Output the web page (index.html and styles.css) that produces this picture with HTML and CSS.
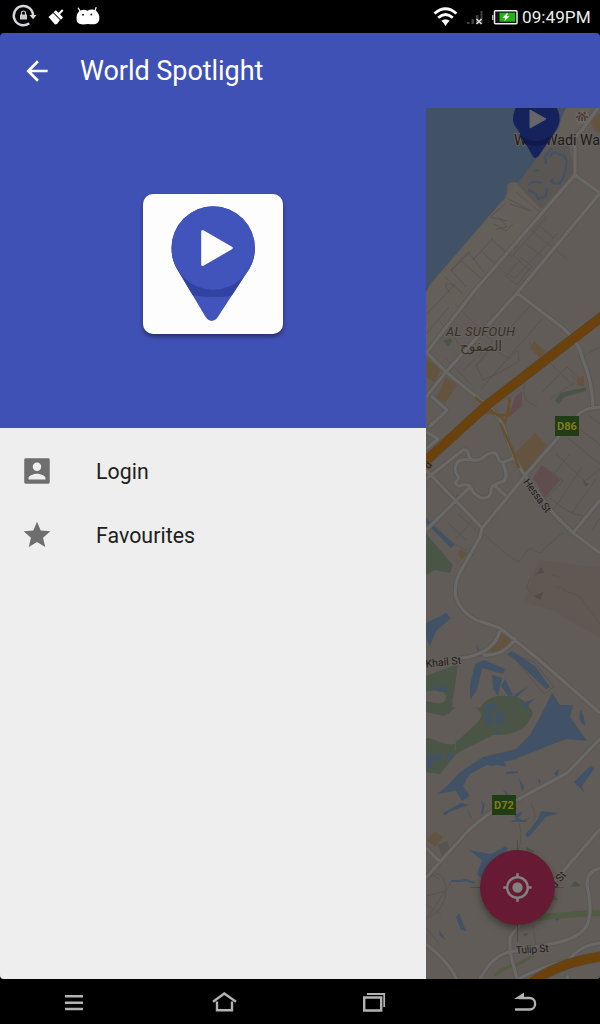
FILE: index.html
```html
<!DOCTYPE html>
<html lang="en">
<head>
<meta charset="utf-8">
<title>World Spotlight</title>
<link rel="stylesheet" href="styles.css">
</head>
<body>
<div class="screen">
  <header class="status">
    <svg class="status-left" width="110" height="33" viewBox="0 0 110 33">
      <path d="M29.200 23.300A9.600 9.600 0 1 1 33 15.500" fill="none" stroke="#d5d5dc" stroke-width="2.500"/>
      <path d="M29.500 15h7l-3.500 4.300z" fill="#d5d5dc"/>
      <rect x="20" y="14.500" width="7" height="5" fill="#ccc"/>
      <path d="M21.500 15v-2a2 2 0 0 1 4 0v2" fill="none" stroke="#ccc" stroke-width="1.200"/>
      <path d="M48.500 17l4.500-4 7 7-3 4-2 .5zM53.500 12.200l2.300-2 2.700 2.600 3.500-3.600 1.500 1.500-3.500 3.600 3 3.200-2 2.200z" fill="#fff"/>
      <path d="M80 11l-1.800-2.800M95 11l1-3.300" stroke="#fff" stroke-width="1.300" stroke-linecap="round"/>
      <path d="M78.500 12c2.500-2.800 6.500-2.800 9-1.300 3-1.800 7-1.600 9.300.8 3 3 3.200 7.500 1.700 10.300-2 3.200-6 2.700-10.500 2.200-5 .8-9.500.8-11-2.500-1-3-.6-7 1.500-9.500z" fill="#fff"/>
      <circle cx="83" cy="14.800" r="1" fill="#222"/><circle cx="91.300" cy="14.500" r="1" fill="#222"/>
    </svg>
    <div class="status-right">
      <svg width="86" height="33" viewBox="432 0 86 33">
        <g fill="none" stroke="#fff" stroke-width="2.800"><path d="M434.500 13.500Q445.500 4 456.500 13.500M438.200 17.700Q445.500 11.200 452.800 17.700"/></g>
        <path d="M441.300 20.700q4.200-3 8.400 0L447.500 23l-2 3-2-3z" fill="#fff"/>
        <path d="M467 22h2.500v2H467zM471.500 19h2.500v5h-2.500zM476 15h2.500v9H476zM480.500 11h2v13h-2z" fill="#414141"/>
        <path d="M476.500 19l5 5m0-5l-5 5" stroke="#ddd" stroke-width="1.600"/>
        <rect x="494.500" y="10.700" width="22.500" height="13" rx="1" fill="#111" stroke="#eee" stroke-width="1.500"/>
        <path d="M492.800 15v5" stroke="#ccc" stroke-width="1.300"/>
        <rect x="499.500" y="12.700" width="15.500" height="9" fill="#20b414"/>
        <path d="M507 13l-4.500 4.800h2.500l-.5 3.500 5-5H507l.8-3.300z" fill="#fff"/>
      </svg>
      <span class="clock">09:49PM</span>
    </div>
  </header>

  <main class="app">
    <div class="toolbar">
      <svg class="back" width="32" height="32" viewBox="0 0 24 24"><path d="M20 11H7.830l5.590-5.590L12 4l-8 8 8 8 1.410-1.410L7.830 13H20v-2z" fill="#fff"/></svg>
      <h1 class="title">World Spotlight</h1>
    </div>
    <div class="content">
      <aside class="drawer">
        <div class="hero">
          <div class="logo">
            <svg width="140" height="140" viewBox="143 194 140 140">
              <clipPath id="pin"><path d="M171.500 248a41.700 41.700 0 1 1 83.400 0c0 8-2 14-5.500 20.500L218.500 316c-4 6.500-9.500 6.500-13.500 0l-28.500-48c-3-6-5-12-5-20z"/></clipPath>
              <g clip-path="url(#pin)">
                <path d="M165 200h95v130h-95z" fill="#4154bb"/>
                <path d="M165 255h95v32q-22 10-47 10t-48-10z" fill="#3142a0"/>
                <path d="M188 291.500l7 3.500M165 287v10l28-2z" fill="#3142a0"/>
              </g>
              <circle cx="213.200" cy="248" r="41.700" fill="#4154bb"/>
              <path d="M202.700 231.500l28.500 16.500-28.500 16.500z" fill="#fdfdfd" stroke="#fdfdfd" stroke-width="3" stroke-linejoin="round"/>
            </svg>
          </div>
        </div>
        <nav class="menu">
          <a class="item"><svg width="34" height="34" viewBox="0 0 24 24"><path d="M3 4v16c0 .6.4 1 1 1h16c.6 0 1-.4 1-1V4c0-.6-.4-1-1-1H4c-.6 0-1 .4-1 1zm12 5c0 1.660-1.340 3-3 3s-3-1.340-3-3 1.340-3 3-3 3 1.340 3 3zm-9 8c0-2 4-3.100 6-3.100s6 1.100 6 3.100v1H6v-1z"/></svg><span class="login">Login</span></a>
          <a class="item"><svg width="32" height="32" viewBox="0 0 24 24"><path d="M12 17.270L18.180 21l-1.640-7.030L22 9.240l-7.190-.61L12 2 9.190 8.630 2 9.240l5.460 4.730L5.820 21z"/></svg><span class="fav">Favourites</span></a>
        </nav>
      </aside>
      <section class="map">
        <svg class="map-art" width="174" height="871" viewBox="426 108 174 871">
          <rect x="426" y="108" width="174" height="871" fill="#615c57"/>
          <path class="sand" d="M566 108L535 158 507 195 426 290V350L475 295 574 180 577 131 592 108z"/>
          <path fill="#595653" d="M543 145l24-8 8 34-34 38-24-25z"/>
          <path class="water" d="M426 108H566Q560 119 559 128L543 148 531 166 518 183Q512 180 507 185 508 192 505 198L488 217 458 252 431 283 426 292z"/>
          <g class="lake-line"><path d="M550 157c5-10 10 0 13-2 6 5 3 12 2 17s-4 12-8 12-8-4-3-5M546 164l-1-8 7-8M529 185c5-7 10 0 13-3M528 190l8 4 2 5 8-3 1-8M534 171l5-1"/></g>
          <path class="rough" d="M538 560l62 8v70l-48-28-28-8z"/>

          <g class="minor">
            <path d="M516 192l30 25-14 14 35 28M548 217l-35 38 17 16M558 233l-43 45-12-6M521 258l11 8-15 19-11-9zM541 227l13 11M526 244l16 12M491 239l22 19M481 251l20 18M493 238l-20 22M460 260l23 20M470 252l-19 18 15 17M452 270l16-18 16 20M445 277l18 17M450 293c-8-9-3-13 4-6M505 204l-15 13 17 4M507 198l24 13-21-7M499 217l8 10-11 2M494 224l12 7 7-7"/>
            <path d="M455 304l38 38-30 28M426 315l30-32M440 322l22 25M449 307l-22 26M445 358l27 27M530 306l-55 61M543 318l-62 71M476 365l15-18 18 12 9-9 1 11-18 11-18 8zM529 343l45 43M526 378c-5 17-1 25 11 28M589 353l11-6M586 371q-7-9 0-17M542 392l25-25 21 20M550 399l25-17M570 374l13 13M588 415l12 9M577 427l23 18M568 438l32 26M556 454l29 27 15-12M545 467l18 14-25 26M570 454l-31 39M582 467l-28 42M596 479l-25 35M583 516q-15-2-33-18M592 530l8-12M448 523l18 17M458 514l18 16M438 534l29 17M474 518l-18 21"/>
            <path d="M483 533c18 17 27 24 34 28 4 4 7-10 12-12s9 6 12 3l22-20M531 577l-5 11 11 10M535 576l5-8M556 588q6-3 10 4 11 0 17 9l17 23M552 575l9 3"/>
            <path d="M426 879c13-8 16-5 19 4s0 28-19 36M427 918l25-37M426 896l19-5M426 904l15 10M426 928l13 15M514 815q12 12 3 40M531 803q7 14 2 19M533 925l3 22M440 880l-12-8"/>
            <path d="M511 653l23 9 20 25-10 7-8-10-21-25"/>
          </g>
          <path fill="#514d49" d="M537 574l4-7 3 6zM534 596l9-4-2 8z"/>

          <path class="park" d="M426 534l27 31-3 8-15-3-9 5zM426 676l32-12-6 43 28 1c5-8 12-13 26-12 12-2 22 6 27 17-5 16-19 23-40 22l-36 18-17 21-14-2zM443 341l7-3 3 3-5 5zM555 401l5-8 26-6v4l-22 6-5 7zM461 494l-1 4-4 1v-4zM583 480l6 4-4 3z"/>
          <path class="land" d="M426 691h15c9 4 5 14-5 12l-10-2zM426 712l18 4c8-2 10-14 21-9 17-2 20 10 11 17l-22 20c-10 2-19-6-28-6zM435 658l18-3-7 8zM452 701l13-42 8 3-8 44z"/>
          <path class="trail" d="M457 724l-2 27"/>
          <path class="water" d="M426 623l20-10 5 5-15 13-6 15-4-8zM426 518l29 27-4 3-25-25zM453 648l1 11M476 645l6 9-2 3zM475 664l9-4 21 9-2 5-21-6-5 22-7 10v-15zM492 675l10 3-4 18-5-7zM507 654l5-3 23 15 15 21-4 2-32-30zM505 679l8 16-5 1-7-10zM528 686l-12 12-3-2zM534 699l-9 10-3-6z"/>
          <path class="water" d="M552 693l8 12 13 0-3 12 17 24-20-2-17 6-33 14-13 3 4 7-21-4-17 9-7 12 7 10-8 5-6-10-19 3 10-8 12-13 24-16 33-8 14-14 10-18zM487 705l8-3 1 6-8 5 6 8-6 5-4-9zM498 708l7 10-5 8-5-3zM493 731l8 0-4 4zM427 755h7l-3 14-4-2zM434 754l9 1-5 8zM446 754l8-1-5 9zM434 688l10-3 4 6-9 1zM581 710l3 7 1 9q-9-7-4-16zM574 782l17-17 3 4-12 17 2 6zM557 778l2-9-5 4zM503 790l5 3-1 4zM519 778l5 9-2 5zM538 778l3 4-2 2zM541 811l18 2-13 4-18 21-3-3 13-16zM443 813l18-10 8 2-20 7-4 4zM468 808l4 12-3-5zM482 800l2 9-3-7zM514 814l9-2-7 8zM469 850l22 4 15-8 2 4-17 12-10 16-4-4 5-14zM456 917l3-4 7 18-5-1zM439 930l7 10-6-4zM457 827l4 2-4-2zM554 918l8-1-5 4zM510 822l18 0-10-4z"/>
          <path class="land" d="M466 779q13-5 29-14l17 2-3 6-30 8-12 5zM517 758l44-15 12 4-19 12-19 10-17 4-4-7z"/>
          <g class="lake-line"><path d="M451 881h10l4-1 10 3M484 803l-2 11M506 773l12-1"/></g>
          <path class="park" d="M530 817l-5 5-5 0zM575 881l6 5-11 1zM526 847l9 4-8 3zM553 893l5 7-5 0zM523 934l5-1-2 4z"/>
          <path class="park-line" d="M537 918q20-3 63-5"/>
          <path class="park-line thin" d="M495 976q10-10 22-11l17-10"/>
          <path fill="#64543f" d="M426 358l15 11-6 13-9-5zM446 377l11 8-12 18-9-5zM534 341l12 11-4 7-12-10zM535 433l12 12-21 28-11-20zM577 377l7-1v10l-7-1zM590 122l10-9v20l-5-2zM460 549l7 4-5 7-4-5zM502 633l9 7-11 14-11-3zM427 840l8-9 8 6-8 10z"/>
          <path fill="#604d50" d="M515 397l7-6v15l-14 12zM542 465l18 15-15 18-12-20z"/>
          <path fill="#57534f" d="M438 845l9-4 5 12-9 7z"/>

          <g class="casing"><path id="r" d="M600 105L582 130 575 137 575 175 475 290 426 353M575 175L600 193 517 293 445 373 426 397M517 293l46 35q17 15 20 32 9 20 10 48l9-1M593 408q-10 1-16 8L527 473 507 498 482 528 480 537 463 567Q453 582 456 598q6 15 20 22l24 8 37 30 63 55M427 353l20 20 40 32q14 12 18 26 4 18 18 42l30 40 20 20 27 20M600 500l-27 33M426 470l29 30 27 28M470 487l-44 43M431 396l16 14-18 17M426 432l12 7-12 10M426 479l37-29c9-2 2 12 13 10 6 2 8-7 16-7 9-2 3 13 14 8l10-4M470 460c-16-3-17 10-12 16 4 5-9 6 1 10 10-3 11-1 14 6 9 10 17 6 18 0-1-8 7-8 13-11 5-5 0-14-1-18M495 486l11 10M500 630q-4 20-31 27l-15 2M483 655q20 2 33-17M601 738l-34 35q-26 14-50 27-25 8-50 32l-27 30-14 16M426 848l14 14M600 829L553 883 510 937v15l7 27M600 868q-14 4-13 17 6 27 0 40-7 14-37 19l-40 8q-18 3-31 29M600 943q-20 2-32 18-20 3-50 18M426 944q24 19 31 36M568 975q-3 5 4 7"/></g>
          <use href="#r" class="road"/>
          <path class="ramp" d="M475 397l22 18 12 0 0-18M482 412q17 0 23 10M500 423q10 20 19 45M505 424l5-24M472 417l20-7"/>
          <path class="highway-edge" d="M604 315L548 358 487 405 430 457 420 467M604 956Q555 963 530 984"/>
          <path class="highway" d="M604 315L548 358 487 405 430 457 420 467M604 956Q555 963 530 984"/>

          <circle cx="582" cy="117" r="7" fill="#6b6662"/><path d="M579 121v-4l3-3 3 3v4m-3 0v-4M577 118v-2m10 2v-2M578.500 114l1.500-2m4 0l1.500 2" stroke="#4a302e" fill="none" stroke-width="1.300"/>
          <text class="poi" x="514" y="145" textLength="86" lengthAdjust="spacingAndGlyphs">Wild Wadi Wa</text>
          <path d="M513 119a23.300 23.300 0 1 1 46.600 0c0 6-3 10-6 15l-15 22q-3 4-6 0l-14-25c-3-4-5.600-7-5.600-12z" fill="#16225c"/>
          <path d="M520 135q16 12 32 0l-6 9q-10 4-21 0z" fill="#101a49"/>
          <path d="M530 110l16 9-16 9z" fill="#65656a" stroke="#65656a" stroke-linejoin="round"/>
          <text class="district" x="446" y="336" textLength="69">AL SUFOUH</text>
          <text class="arabic" x="481" y="351" textLength="42" lengthAdjust="spacingAndGlyphs">الصفوح</text>
          <text class="street" transform="translate(523 482) rotate(54)" textLength="39">Hessa St</text>
          <text class="street" transform="translate(426 667.500) rotate(-6)" textLength="35.500" lengthAdjust="spacingAndGlyphs">Khail St</text>
          <text class="street" transform="translate(516 954) rotate(-4)" textLength="33">Tulip St</text>
          <text class="street" transform="translate(555 889) rotate(-50)">d St</text>
          <text class="street on-road" transform="translate(428.500 469.500) rotate(-48)">d</text>
          <rect x="555" y="416" width="24" height="20" fill="#203d18"/><text class="badge" x="567" y="430">D86</text>
          <rect x="492" y="795" width="24" height="20" fill="#203d18"/><text class="badge" x="504" y="809">D72</text>
          <path d="M517.500 840v102M470 887.500h94" stroke="#45403c" stroke-width=".6"/>
        </svg>
        <button class="fab" aria-label="My location"><svg width="31" height="31" viewBox="0 0 24 24"><path d="M12 8a4 4 0 1 0 0 8 4 4 0 0 0 0-8zm8.940 3A8.994 8.994 0 0 0 13 3.060V1h-2v2.060A8.994 8.994 0 0 0 3.060 11H1v2h2.060A8.994 8.994 0 0 0 11 20.940V23h2v-2.060A8.994 8.994 0 0 0 20.940 13H23v-2h-2.060zM12 19c-3.870 0-7-3.130-7-7s3.130-7 7-7 7 3.130 7 7-3.130 7-7 7z"/></svg></button>
      </section>
    </div>
  </main>

  <footer class="navbar">
    <svg width="26" height="26" viewBox="61 990 26 26"><path d="M65 996.300h18M65 1002.700h18M65 1009h18" stroke="#b2b2b2" stroke-width="2.400"/></svg>
    <svg width="26" height="26" viewBox="211 990 26 26"><path d="M213 1001.800l11.300-8.300 11.700 8.300M217 1001.500v8.800h15v-8.800" fill="none" stroke="#b2b2b2" stroke-width="2.400"/></svg>
    <svg width="26" height="26" viewBox="361 990 26 26"><path d="M364.200 997.500h17v13h-17z" fill="none" stroke="#b2b2b2" stroke-width="2.400"/><path d="M367 994h17.200v13" fill="none" stroke="#b2b2b2" stroke-width="1.800"/></svg>
    <svg width="26" height="26" viewBox="511 990 26 26"><path d="M515 1009.500h14.500c7.500 0 7.500-11.500 0-11.500H519" fill="none" stroke="#b2b2b2" stroke-width="2.300"/><path d="M514 999l10-6.500v6.500z" fill="#b2b2b2"/></svg>
  </footer>
</div>
</body>
</html>
```
FILE: styles.css
```css
* { box-sizing: border-box; }
body { margin: 0; background: #000; font-family: Roboto, "Noto Sans", sans-serif; }
svg { display: block; flex: none; }
.screen { width: 600px; height: 1024px; display: flex; flex-direction: column; background: #000; }
.status { height: 33px; display: flex; justify-content: space-between; }
.status-right { display: flex; width: 168px; gap: 4px; }
.clock { color: #ececec; font-size: 17.200px; line-height: 34px; white-space: nowrap; }
.app { height: 946px; display: flex; flex-direction: column; border-radius: 4px; overflow: hidden; background: #4051b5; }
.toolbar { height: 75px; display: flex; align-items: center; padding-left: 21px; gap: 27px; }
.title { margin: 0; color: #fff; font-size: 27px; font-weight: 400; line-height: 36px; white-space: nowrap; padding-top: 1px; letter-spacing: -.05px; }
.content { height: 871px; display: flex; }
.drawer { width: 426px; background: #eee; display: flex; flex-direction: column; }
.hero { height: 320px; padding: 86px 143px; background: #4051b5; }
.logo { width: 140px; height: 140px; border-radius: 10px; background: #fdfdfd; box-shadow: 0 3px 4px rgba(0, 0, 0, .4); }
.menu { padding-top: 11px; }
.item { height: 64px; display: grid; grid-template-columns: 34px 1fr; column-gap: 42px; align-items: center; padding-left: 20px; color: #202020; font-size: 21.300px; }
.item svg { fill: #6e6e6e; justify-self: center; }
.item span { padding-top: 1px; letter-spacing: .05px; }
.map { width: 174px; height: 871px; position: relative; overflow: hidden; }
.fab { position: absolute; left: 54px; top: 742px; width: 75px; height: 75px; padding: 0; border: 0; border-radius: 50%; background: #661a34; display: flex; align-items: center; justify-content: center; box-shadow: 0 4px 7px rgba(0, 0, 0, .35); }
.fab svg { fill: #858080; }
.navbar { height: 45px; display: flex; align-items: center; justify-content: space-between; padding: 2px 63px 0 61px; }
.sand { fill: #645f58; }
.water { fill: #425266; }
.rough { fill: #605853; }
.park { fill: #4a5548; }
.land { fill: #615c57; }
.lake-line { fill: none; stroke: #425266; stroke-width: 2; }
.minor { fill: none; stroke: #585450; stroke-width: 1; }
.park-line { fill: none; stroke: #515b43; stroke-width: 6; }
.thin { stroke-width: 3; }
.trail { fill: none; stroke: #5a5e54; stroke-width: 1; }
.casing { fill: none; stroke: #5a5652; stroke-width: 5; stroke-linejoin: round; }
.road { fill: none; stroke: #696866; stroke-width: 3.200; stroke-linejoin: round; }
.ramp { fill: none; stroke: #67502d; stroke-width: 2.500; }
.highway-edge { fill: none; stroke: #5c4527; stroke-width: 10; }
.highway { fill: none; stroke: #6c420c; stroke-width: 8; }
.poi, .district, .arabic, .street { paint-order: stroke; stroke: #65615d; stroke-width: 2px; fill: #1d1b1a; }
.poi { font-size: 14.500px; }
.district { font-size: 13px; font-style: italic; fill: #373024; }
.arabic { font-family: "DejaVu Sans", sans-serif; font-size: 14px; fill: #373024; text-anchor: middle; }
.street { font-size: 10.500px; }
.on-road { stroke: #6a5235; }
.badge { font-size: 11px; font-weight: 700; fill: #827f10; text-anchor: middle; }
```
